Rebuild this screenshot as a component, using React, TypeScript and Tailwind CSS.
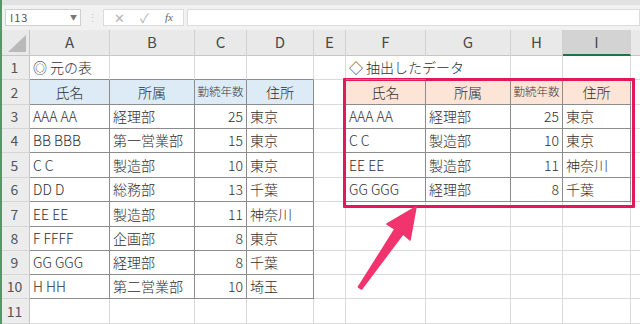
import * as React from 'react';

type Cell = { text: string; align?: 'left' | 'center' | 'right'; small?: boolean };

const cols = [
  { key: 'A', w: 80 },
  { key: 'B', w: 85 },
  { key: 'C', w: 52 },
  { key: 'D', w: 67 },
  { key: 'E', w: 32 },
  { key: 'F', w: 80 },
  { key: 'G', w: 85 },
  { key: 'H', w: 52 },
  { key: 'I', w: 68 },
  { key: '', w: 40 },
];

const rowHeights = [24, 25, 24, 24, 25, 24, 25, 24, 24, 24, 25];

const header = (a: string, b: string, c: string, d: string) => [
  { text: a, align: 'center' },
  { text: b, align: 'center' },
  { text: c, align: 'center', small: true },
  { text: d, align: 'center' },
] as Cell[];

const rec = (n: string, dept: string, yrs: string, addr: string) => [
  { text: n },
  { text: dept },
  { text: yrs, align: 'right' },
  { text: addr },
] as Cell[];

const original = [
  header('氏名', '所属', '勤続年数', '住所'),
  rec('AAA AA', '経理部', '25', '東京'),
  rec('BB BBB', '第一営業部', '15', '東京'),
  rec('C C', '製造部', '10', '東京'),
  rec('DD D', '総務部', '13', '千葉'),
  rec('EE EE', '製造部', '11', '神奈川'),
  rec('F FFFF', '企画部', '8', '東京'),
  rec('GG GGG', '経理部', '8', '千葉'),
  rec('H HH', '第二営業部', '10', '埼玉'),
];

const extracted = [
  header('氏名', '所属', '勤続年数', '住所'),
  rec('AAA AA', '経理部', '25', '東京'),
  rec('C C', '製造部', '10', '東京'),
  rec('EE EE', '製造部', '11', '神奈川'),
  rec('GG GGG', '経理部', '8', '千葉'),
];

// r is the 1-based sheet row, c the 0-based column index
function inT1(r: number, c: number) {
  return r >= 2 && r <= 10 && c >= 0 && c <= 3;
}
function inT2(r: number, c: number) {
  return r >= 2 && r <= 6 && c >= 5 && c <= 8;
}
function inTable(r: number, c: number) {
  return inT1(r, c) || inT2(r, c);
}

function getCell(r: number, c: number): Cell | null {
  if (r === 1 && c === 0) return { text: '◎ 元の表' };
  if (r === 1 && c === 5) return { text: '◇ 抽出したデータ' };
  if (inT1(r, c)) return original[r - 2][c];
  if (inT2(r, c)) return extracted[r - 2][c - 5];
  return null;
}

function SheetCell({ r, c, w }: { r: number; c: number; w: number }) {
  const cell = getCell(r, c);
  const darkRight = inTable(r, c) || inTable(r, c + 1);
  const darkBottom = inTable(r, c) || inTable(r + 1, c);
  const overflow = r === 1 && c === 5;
  let bg = '';
  if (r === 2 && inT1(r, c)) bg = 'bg-[#ddebf7]';
  if (r === 2 && inT2(r, c)) bg = 'bg-[#fce4d6]';
  const align =
    cell?.align === 'center' ? 'justify-center' : cell?.align === 'right' ? 'justify-end pr-[3px]' : 'justify-start pl-[3px]';
  return (
    <div
      style={{ width: w }}
      className={`relative flex shrink-0 items-center border-r border-b whitespace-nowrap ${align} ${bg} ${
        darkRight ? 'border-r-[#8c8c8c]' : overflow ? 'border-r-transparent' : 'border-r-[#dadada]'
      } ${darkBottom ? 'border-b-[#8c8c8c]' : 'border-b-[#dadada]'} ${overflow ? 'z-10 overflow-visible' : 'overflow-hidden'}`}
    >
      {cell && (
        <span className={cell.small ? 'text-[11.5px] font-light text-[#3a3a3a]' : 'text-[14px] font-light text-[#2e2e2e]'}>
          {cell.text}
        </span>
      )}
    </div>
  );
}

function FormulaBar() {
  return (
    <div className="flex h-[30px] items-start border-t-[5px] border-t-[#e2e2e2] bg-[#f1f1f1] pt-[4px]">
      <div className="ml-[5px] flex h-[17px] w-[76px] items-center justify-between border border-[#d0d0d0] bg-white pr-[3px] pl-[4px]">
        <span className="text-[11px] tracking-[1px] text-[#555]">I13</span>
        <span className="text-[7px] text-[#777]">▼</span>
      </div>
      <div className="flex h-[17px] w-[22px] items-center justify-center text-[11px] text-[#c4c4c4]">⋮</div>
      <div className="flex h-[17px] w-[81px] items-center border border-[#dcdcdc] bg-white text-[#b5b5b5]">
        <span className="ml-[10px] text-[13px]">✕</span>
        <span className="ml-[15px] text-[13px]">✓</span>
        <span className="ml-[16px] font-['Liberation_Serif',serif] text-[11px] text-[#666] italic">fx</span>
      </div>
      <div className="ml-[3px] h-[17px] flex-1 border border-[#dcdcdc] bg-white" />
    </div>
  );
}

function ColumnHeader() {
  return (
    <div className="flex h-[26px] bg-[#e9e9e9]">
      <div className="relative w-[30px] shrink-0 border-r border-b border-[#c6c6c6]">
        <svg className="absolute right-[3px] bottom-[3px]" width="18" height="17" viewBox="0 0 18 17">
          <polygon points="18,0 18,17 0,17" fill="#b9b9b9" />
        </svg>
      </div>
      {cols.map((col, i) => {
        const selected = col.key === 'I';
        return (
          <div
            key={i}
            style={{ width: col.w }}
            className={`flex shrink-0 items-center justify-center border-r border-[#d0d0d0] text-[15px] text-[#4a4a4a] ${
              selected ? 'border-b-2 border-b-[#217346] bg-[#d3d3d3]' : 'border-b border-b-[#c6c6c6]'
            }`}
          >
            {col.key}
          </div>
        );
      })}
    </div>
  );
}

export default function App() {
  return (
    <div className="relative h-[324px] w-[640px] overflow-hidden bg-white font-['Noto_Sans_CJK_JP',sans-serif]">
      <FormulaBar />
      <ColumnHeader />
      {rowHeights.map((h, i) => {
        const r = i + 1;
        return (
          <div key={r} className="flex" style={{ height: h }}>
            <div className="flex w-[30px] shrink-0 items-center justify-center border-r border-b border-r-[#c6c6c6] border-b-[#d6d6d6] bg-[#ececec] text-[14px] text-[#555]">
              {r}
            </div>
            {cols.map((col, c) => (
              <SheetCell key={c} r={r} c={c} w={col.w} />
            ))}
          </div>
        );
      })}

      {/* window edge */}
      <div className="absolute top-0 left-0 h-full w-[2px] bg-[#4f9a68]" />

      {/* highlight box */}
      <div className="pointer-events-none absolute top-[78px] left-[343px] h-[130px] w-[292px] rounded-[1px] border-[3px] border-[#e3175b]" />

      {/* arrow */}
      <svg className="pointer-events-none absolute top-0 left-0" width="640" height="324" viewBox="0 0 640 324">
        <polygon
          points="416,207 410,240 403,234 361.6,289 358.4,287 395,229 387,224"
          fill="#f1346d"
          stroke="#f1346d"
          strokeWidth="1.5"
          strokeLinejoin="round"
        />
      </svg>
    </div>
  );
}
